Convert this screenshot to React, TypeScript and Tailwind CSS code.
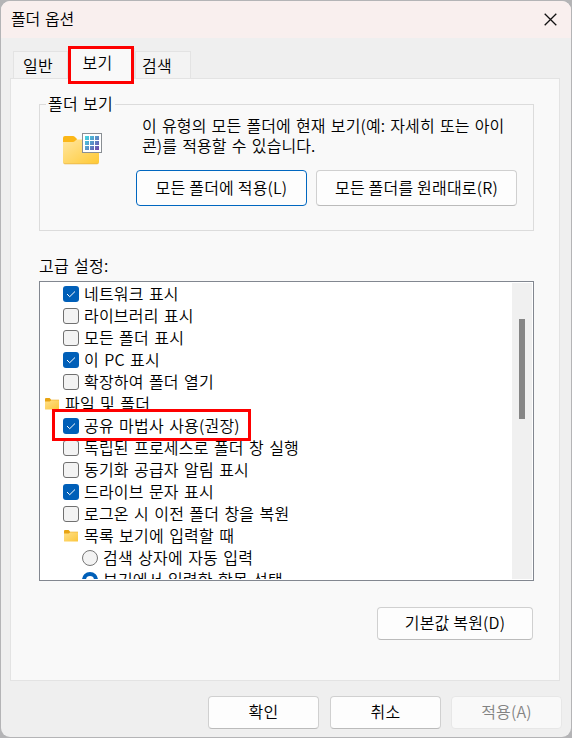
import React, { useState } from "react";
import clsx from "clsx";

type Item = {
  label: string;
  kind: "check" | "folder" | "radio";
  checked?: boolean;
  indent: string;
};

const initialItems: Item[] = [
  { label: "네트워크 표시", kind: "check", checked: true, indent: "pl-[23px]" },
  { label: "라이브러리 표시", kind: "check", indent: "pl-[23px]" },
  { label: "모든 폴더 표시", kind: "check", indent: "pl-[23px]" },
  { label: "이 PC 표시", kind: "check", checked: true, indent: "pl-[23px]" },
  { label: "확장하여 폴더 열기", kind: "check", indent: "pl-[23px]" },
  { label: "파일 및 폴더", kind: "folder", indent: "pl-1" },
  { label: "공유 마법사 사용(권장)", kind: "check", checked: true, indent: "pl-[23px]" },
  { label: "독립된 프로세스로 폴더 창 실행", kind: "check", indent: "pl-[23px]" },
  { label: "동기화 공급자 알림 표시", kind: "check", indent: "pl-[23px]" },
  { label: "드라이브 문자 표시", kind: "check", checked: true, indent: "pl-[23px]" },
  { label: "로그온 시 이전 폴더 창을 복원", kind: "check", indent: "pl-[23px]" },
  { label: "목록 보기에 입력할 때", kind: "folder", indent: "pl-[23px]" },
  { label: "검색 상자에 자동 입력", kind: "radio", indent: "pl-[42px]" },
  { label: "보기에서 입력한 항목 선택", kind: "radio", checked: true, indent: "pl-[42px]" },
];

const SmallFolder = () => (
  <svg width="16" height="16" viewBox="0 0 16 16" className="shrink-0">
    <defs>
      <linearGradient id="smallFolder" x1="0" y1="0" x2="1" y2="1">
        <stop offset="0" stopColor="#ffe08a" />
        <stop offset="1" stopColor="#fbc63c" />
      </linearGradient>
    </defs>
    <path d="M1 3q0-1 1-1h3.600l1.600 1.700H15v3H1z" fill="#e8a413" />
    <path d="M1 5.500h4.800l1.500-1.200H15v8.700q0 .5-.5.5h-13q-.5 0-.5-.5z" fill="url(#smallFolder)" />
  </svg>
);

const FolderViewIcon = () => (
  <svg width="42" height="36" viewBox="0 0 42 36">
    <defs>
      <linearGradient id="folder" x1="0" y1="0" x2="1" y2="1">
        <stop offset="0" stopColor="#ffe6a0" />
        <stop offset="1" stopColor="#ffc933" />
      </linearGradient>
      <linearGradient id="grid" gradientUnits="userSpaceOnUse" x1="22" y1="6" x2="36" y2="18">
        <stop offset="0" stopColor="#45d3e2" />
        <stop offset="0.5" stopColor="#5b8ec6" />
        <stop offset="1" stopColor="#7042a8" />
      </linearGradient>
    </defs>
    <path d="M1 5q0-2 2-2h8q1 0 2 1l2 2v4H1z" fill="#fbb718" />
    <path d="M1 9h10q1 0 2-1l1.500-1.500H37V29q0 2-2 2H3q-2 0-2-2z" fill="url(#folder)" />
    <path d="M1.500 30q.5.800 1.500.800h32q1 0 1.500-.8" fill="none" stroke="#e9b64a" strokeWidth="0.800" />
    <rect x="20.500" y="0.500" width="19" height="19" fill="#fff" stroke="#8a8f94" />
    <path
      d="M23 3h4v4h-4zM28 3h4v4h-4zM33 3h4v4h-4zM23 8h4v4h-4zM28 8h4v4h-4zM33 8h4v4h-4zM23 13h4v4h-4zM28 13h4v4h-4zM33 13h4v4h-4z"
      fill="url(#grid)"
    />
  </svg>
);

const Marker = ({ item }: { item: Item }) => {
  if (item.kind === "folder") return <SmallFolder />;
  if (item.kind === "radio") {
    return (
      <span
        className={clsx(
          "h-4 w-4 shrink-0 rounded-full",
          item.checked ? "border-4 border-[#005fb8] bg-white" : "border border-[#767676] bg-[#f3f3f3]"
        )}
      />
    );
  }
  return (
    <span
      className={clsx(
        "flex h-4 w-4 shrink-0 items-center justify-center rounded-[3px]",
        item.checked ? "bg-[#005fb8]" : "border border-[#707070] bg-[#f3f3f3]"
      )}
    >
      {item.checked && (
        <svg width="16" height="16" viewBox="0 0 16 16" fill="none" stroke="#fff">
          <path d="M4 8l2.700 2.700L12 5.500" />
        </svg>
      )}
    </span>
  );
};

interface ButtonProps {
  children: React.ReactNode;
  className?: string;
  disabled?: boolean;
}

const Button: React.FC<ButtonProps> = ({ children, className, disabled }) => (
  <button
    type="button"
    disabled={disabled}
    className={clsx(
      "flex items-center justify-center rounded-[4px] border pb-[3px] whitespace-nowrap",
      disabled ? "border-[#e7e7e7] bg-[#f9f9f9] text-[#838383]" : "bg-[#fdfdfd]",
      className
    )}
  >
    {children}
  </button>
);

export default function App() {
  const [items, setItems] = useState(initialItems);

  const toggle = (index: number) => {
    setItems((prev) =>
      prev.map((item, i) =>
        i === index && item.kind === "check" ? { ...item, checked: !item.checked } : item
      )
    );
  };

  return (
    <div className="h-[738px] w-[572px] overflow-hidden bg-[#b4b4b6] p-px font-['Noto_Sans_CJK_KR',sans-serif] text-[16px] leading-[20px] font-[350] tracking-[0.2px] [word-spacing:1.5px] text-black">
      <div className="flex h-full flex-col overflow-hidden rounded-[9px] bg-[#efefef]">
        <header className="flex h-[37px] shrink-0 items-center justify-between bg-[#f9efee] pr-[14px] pl-[10px]">
          <h1 className="-mt-1 tracking-[-0.2px]">폴더 옵션</h1>
          <button type="button" aria-label="닫기">
            <svg width="13" height="13" viewBox="0 0 13 13" stroke="#111" strokeWidth="1.300">
              <path d="M.7.7l11.600 11.600M12.300.7L.7 12.300" />
            </svg>
          </button>
        </header>

        {/* 탭 */}
        <nav className="relative z-10 flex h-10 shrink-0 items-end pl-3">
          <button type="button" className="h-[27px] w-[55px] border border-b-0 border-[#e3e3e3] bg-[#f3f3f3] pr-[5px] pb-px">
            일반
          </button>
          <button type="button" className="relative -mb-px h-[31px] w-[67px] border border-b-0 border-[#e3e3e3] bg-[#f9f9f9] pr-2 pb-1">
            보기
            <span className="absolute -top-[3px] -left-px h-[38px] w-[66px] border-3 border-[#fe0000]" />
          </button>
          <button type="button" className="h-[27px] w-[56px] border border-b-0 border-[#e3e3e3] bg-[#f3f3f3] pr-3 pb-px">
            검색
          </button>
        </nav>

        <main className="mr-[11px] ml-[9px] flex h-[603px] shrink-0 flex-col border border-[#e3e3e3] bg-[#f9f9f9] px-7 pt-[15px]">
          {/* 폴더 보기 */}
          <fieldset className="h-[137px] w-[495px] shrink-0 border border-[#dcdcdc]">
            <legend className="ml-[6px] h-5 px-[2px] leading-[18px]">폴더 보기</legend>
            <div className="flex h-[56px] pl-[22px]">
              <div className="w-[80px] shrink-0 pt-[19px]">
                <FolderViewIcon />
              </div>
              <p className="mt-px tracking-[0.1px] whitespace-nowrap">
                이 유형의 모든 폴더에 현재 보기(예: 자세히 또는 아이
                <br />
                콘)를 적용할 수 있습니다.
              </p>
            </div>
            <div className="flex gap-[9px] pl-24">
              <Button className="h-9 w-[171px] border-[#0067c0]">모든 폴더에 적용(L)</Button>
              <Button className="h-9 w-[201px] border-[#d0d0d0] border-b-[#bbb]">모든 폴더를 원래대로(R)</Button>
            </div>
          </fieldset>

          <h2 className="mt-6">고급 설정:</h2>
          <div className="relative mt-[6px] h-[300px] w-[495px] shrink-0 border border-[#828790] bg-white">
            <div className="flex h-full py-px pr-px">
              <ul className="flex-1 overflow-hidden">
                {items.map((item, i) => (
                  <li
                    key={item.label}
                    onClick={() => toggle(i)}
                    className={clsx("flex h-[22px] items-center gap-[5px] whitespace-nowrap", item.indent)}
                  >
                    <Marker item={item} />
                    <span className="pb-[3px]">{item.label}</span>
                  </li>
                ))}
              </ul>
              <div className="flex w-5 justify-center bg-[#f0f0f0] pt-9">
                <div className="h-[100px] w-[6px] bg-[#868686]" />
              </div>
            </div>
            <span className="absolute top-[127px] left-3 h-8 w-[199px] border-3 border-[#fe0000]" />
          </div>

          <Button className="-mr-[2px] mt-[26px] h-[33px] w-[156px] self-end border-[#d0d0d0] border-b-[#bbb]">
            기본값 복원(D)
          </Button>
        </main>

        <footer className="flex justify-end pt-[15px] pr-[9px]">
          <Button className="mr-[11px] h-[33px] w-[111px] border-[#d0d0d0] border-b-[#bbb]">확인</Button>
          <Button className="mr-[10px] h-[33px] w-[111px] border-[#d0d0d0] border-b-[#bbb]">취소</Button>
          <Button className="h-[33px] w-[111px]" disabled>
            적용(A)
          </Button>
        </footer>
      </div>
    </div>
  );
}
